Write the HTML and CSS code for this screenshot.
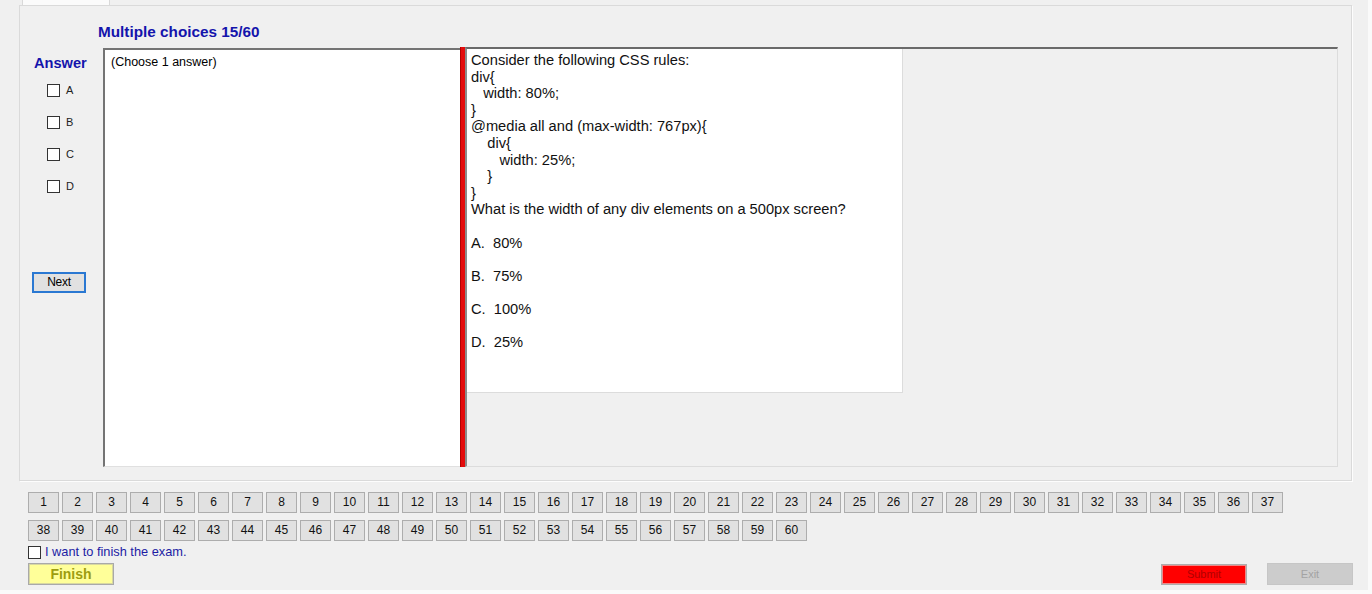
FILE: index.html
```html
<!DOCTYPE html>
<html>
<head>
<meta charset="utf-8">
<title>Exam</title>
<link rel="stylesheet" href="styles.css">
</head>
<body>
<div class="window">
  <div class="tabstrip"><div class="tab"></div></div>
  <div class="tabpage">
    <div class="title">Multiple choices 15/60</div>
    <div class="main">
      <div class="answer-col">
        <div class="answer-label">Answer</div>
        <div class="choices">
          <div class="choice"><span class="box"></span><span>A</span></div>
          <div class="choice"><span class="box"></span><span>B</span></div>
          <div class="choice"><span class="box"></span><span>C</span></div>
          <div class="choice"><span class="box"></span><span>D</span></div>
        </div>
        <div class="next-btn">Next</div>
      </div>
      <div class="textbox">(Choose 1 answer)</div>
      <div class="splitter"></div>
      <div class="right-panel">
        <div class="question">
<div class="code">Consider the following CSS rules:
div{
   width: 80%;
}
@media all and (max-width: 767px){
    div{
       width: 25%;
    }
}
What is the width of any div elements on a 500px screen?</div>
          <p class="opt">A.&nbsp; 80%</p>
          <p class="opt">B.&nbsp; 75%</p>
          <p class="opt">C.&nbsp; 100%</p>
          <p class="opt">D.&nbsp; 25%</p>
        </div>
      </div>
    </div>
  </div>

  <div class="numbers">
    <div class="num">1</div><div class="num">2</div><div class="num">3</div><div class="num">4</div><div class="num">5</div><div class="num">6</div><div class="num">7</div><div class="num">8</div><div class="num">9</div><div class="num">10</div>
    <div class="num">11</div><div class="num">12</div><div class="num">13</div><div class="num">14</div><div class="num">15</div><div class="num">16</div><div class="num">17</div><div class="num">18</div><div class="num">19</div><div class="num">20</div>
    <div class="num">21</div><div class="num">22</div><div class="num">23</div><div class="num">24</div><div class="num">25</div><div class="num">26</div><div class="num">27</div><div class="num">28</div><div class="num">29</div><div class="num">30</div>
    <div class="num">31</div><div class="num">32</div><div class="num">33</div><div class="num">34</div><div class="num">35</div><div class="num">36</div><div class="num">37</div><div class="num">38</div><div class="num">39</div><div class="num">40</div>
    <div class="num">41</div><div class="num">42</div><div class="num">43</div><div class="num">44</div><div class="num">45</div><div class="num">46</div><div class="num">47</div><div class="num">48</div><div class="num">49</div><div class="num">50</div>
    <div class="num">51</div><div class="num">52</div><div class="num">53</div><div class="num">54</div><div class="num">55</div><div class="num">56</div><div class="num">57</div><div class="num">58</div><div class="num">59</div><div class="num">60</div>
  </div>

  <div class="finish-check"><span class="box"></span><span class="finish-text">I want to finish the exam.</span></div>

  <div class="actions">
    <div class="finish-btn">Finish</div>
    <div class="right-actions">
      <div class="submit-btn">Submit</div>
      <div class="exit-btn">Exit</div>
    </div>
  </div>
</div>
</body>
</html>
```

FILE: styles.css
```css
html, body {
  margin: 0;
  padding: 0;
}
body {
  background: #fafafa;
  font-family: "Liberation Sans", Arial, sans-serif;
  font-size: 12px;
  color: #000;
}
.window {
  width: 1368px;
  height: 590px;
  background: #f0f0f0;
  overflow: hidden;
}
.tabstrip {
  height: 5px;
  padding-left: 22px;
}
.tab {
  width: 88px;
  height: 5px;
  background: #fbfbfb;
  border-left: 1px solid #d9d9d9;
  border-right: 1px solid #d9d9d9;
  box-sizing: border-box;
}
.tabpage {
  margin-left: 19px;
  width: 1333px;
  height: 476px;
  box-sizing: border-box;
  border: 1px solid #dadada;
  box-shadow: 1px 1px 0 #fdfdfd;
  display: flex;
  flex-direction: column;
}
.title {
  padding-top: 18px;
  padding-left: 78px;
  line-height: 16px;
  font-size: 15.3px;
  font-weight: bold;
  color: #1414ac;
}
.main {
  margin-top: 7px;
  display: flex;
  height: 420px;
}
.answer-col {
  width: 83px;
  flex: none;
  display: flex;
  flex-direction: column;
}
.answer-label {
  padding-top: 8px;
  padding-left: 14px;
  line-height: 16px;
  font-size: 14.6px;
  font-weight: bold;
  color: #1414ac;
}
.choices {
  margin-top: 11px;
  display: flex;
  flex-direction: column;
  gap: 16px;
  padding-left: 27px;
}
.choice {
  display: flex;
  align-items: center;
  height: 16px;
  gap: 6px;
  font-size: 11px;
  color: #222;
}
.box {
  display: inline-block;
  width: 13px;
  height: 13px;
  box-sizing: border-box;
  border: 1px solid #333;
  background: #fff;
  flex: none;
}
.next-btn {
  margin-top: 78px;
  margin-left: 12px;
  width: 54px;
  height: 21px;
  box-sizing: border-box;
  border: 2px solid #2a78d2;
  background: #e1e1e1;
  font-size: 12px;
  line-height: 17px;
  text-align: center;
  letter-spacing: -0.3px;
}
.textbox {
  margin-top: 1px;
  width: 357px;
  height: 419px;
  box-sizing: border-box;
  flex: none;
  background: #fff;
  border-left: 2px solid #747474;
  border-top: 2px solid #747474;
  border-bottom: 1px solid #e0e0e0;
  padding: 4px 0 0 6px;
  font-size: 12.5px;
  line-height: 16px;
}
.splitter {
  width: 5px;
  flex: none;
  height: 420px;
  background: #e30b0b;
  border-left: 1px solid #b00000;
  box-sizing: border-box;
}
.right-panel {
  width: 873px;
  flex: none;
  height: 420px;
  box-sizing: border-box;
  border-top: 2px solid #6a6a6a;
  border-left: 2px solid #8a8a8a;
  border-right: 1px solid #dcdcdc;
  border-bottom: 1px solid #dcdcdc;
  background: #f0f0f0;
}
.question {
  width: 436px;
  height: 344px;
  box-sizing: border-box;
  background: #fff;
  border-right: 1px solid #dcdcdc;
  border-bottom: 1px solid #dcdcdc;
  padding: 3px 0 0 4px;
  font-size: 14.67px;
  line-height: 16.6px;
  color: #111;
}
.code {
  white-space: pre;
}
.opt {
  margin: 16.6px 0 0 0;
}
.numbers {
  margin-top: 11px;
  margin-left: 28px;
  display: grid;
  grid-template-columns: repeat(37, 31px);
  column-gap: 3px;
  row-gap: 7px;
}
.num {
  height: 21px;
  box-sizing: border-box;
  border: 1px solid #adadad;
  background: #e1e1e1;
  text-align: center;
  line-height: 19px;
  font-size: 12px;
  color: #111;
}
.finish-check {
  margin-top: 3px;
  margin-left: 28px;
  height: 15px;
  display: flex;
  align-items: flex-end;
  gap: 4px;
}
.finish-text {
  color: #1c1ca4;
  font-size: 12.8px;
  line-height: 14px;
}
.actions {
  margin-top: 4px;
  display: flex;
  align-items: flex-start;
  padding-left: 28px;
}
.finish-btn {
  width: 86px;
  height: 22px;
  box-sizing: border-box;
  background: #ffff99;
  border: 1px solid #a9a9a9;
  box-shadow: inset 0 0 0 1px #d8d8a0;
  text-align: center;
  line-height: 20px;
  font-size: 14px;
  font-weight: bold;
  color: #9d9d10;
}
.right-actions {
  margin-left: auto;
  display: flex;
  gap: 20px;
  margin-right: 15px;
}
.submit-btn {
  margin-top: 1px;
  width: 86px;
  height: 21px;
  box-sizing: border-box;
  background: #ff0000;
  border: 1px solid #adadad;
  box-shadow: inset 0 0 0 1px #e88;
  text-align: center;
  line-height: 19px;
  font-size: 11px;
  color: #b00000;
}
.exit-btn {
  width: 86px;
  height: 22px;
  box-sizing: border-box;
  background: #cccccc;
  border: 1px solid #c6c6c6;
  text-align: center;
  line-height: 20px;
  font-size: 11px;
  color: #a3a3a3;
}
```
